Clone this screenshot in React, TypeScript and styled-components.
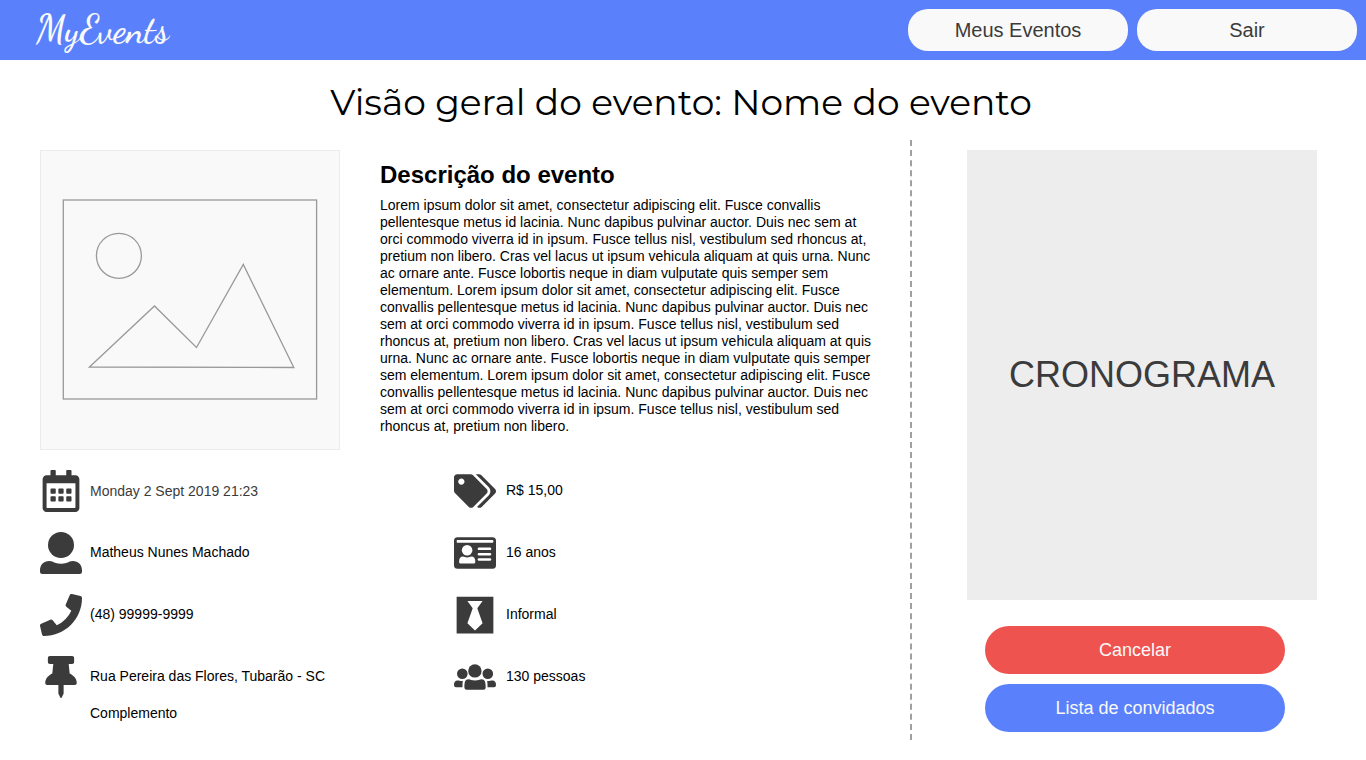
import React from 'react';
import styled, { createGlobalStyle } from 'styled-components';
import { FaRegCalendarAlt, FaPhone, FaThumbtack, FaTags, FaBlackTie } from 'react-icons/fa';

const GlobalStyle = createGlobalStyle`
  *, *::before, *::after { box-sizing: border-box; }
  body { margin: 0; background: #fff; color: #000; font: 14px/17px "Liberation Sans", Arial, sans-serif; }
  h1, h2, p { margin: 0; }
`;

const TopBar = styled.header`
  display: flex;
  align-items: center;
  justify-content: space-between;
  height: 60px;
  padding: 0 9px 0 36px;
  background: #5a81fb;
`;

const Logo = styled.a`
  color: #f9f9f9;
  font: 600 38px/44px "Satisfy", "Dancing Script", "Lato", cursive;
  text-decoration: none;
`;

const Nav = styled.nav`
  display: flex;
  gap: 9px;
`;

const NavButton = styled.button`
  width: 220px;
  height: 42px;
  padding: 0;
  border: 0;
  border-radius: 20px;
  background: #f9f9f9;
  color: #3b3b3b;
  font: 20px/24px "Liberation Sans", Arial, sans-serif;
  cursor: pointer;
`;

const Title = styled.h1`
  padding: 20px 4px 16px 0;
  font: 400 36px/44px "Montserrat", "Inter", sans-serif;
  text-align: center;
`;

const Page = styled.main`
  display: grid;
  grid-template-columns: minmax(0, 1fr) 456px;
  padding-bottom: 20px;
`;

const Overview = styled.section`
  min-height: 600px;
  padding: 10px 36px 0 40px;
`;

const Intro = styled.div`
  display: grid;
  grid-template-columns: 300px minmax(0, 1fr);
  gap: 40px;
`;

const Placeholder = styled.svg`
  display: block;
  width: 300px;
  height: 300px;
  border: 1px solid #ececec;
  background: #f9f9f9;
  fill: none;
  stroke: #999;
  stroke-width: 1.3;
`;

const Description = styled.div`
  padding-top: 10px;

  h2 {
    margin-bottom: 7px;
    font-size: 24px;
    line-height: 30px;
  }
`;

const Facts = styled.div`
  display: grid;
  grid-template-columns: 374px minmax(0, 1fr);
  gap: 40px;
  margin-top: 20px;
`;

const FactList = styled.ul<{ $gap: number }>`
  display: flex;
  flex-direction: column;
  gap: 20px;
  margin: 0;
  padding: 0;
  list-style: none;

  > li {
    column-gap: ${({ $gap }) => $gap}px;
  }
`;

const Fact = styled.li<{ $muted?: boolean }>`
  display: grid;
  grid-template-columns: 42px 1fr;
  align-items: center;
  color: ${({ $muted }) => ($muted ? '#3b3b3b' : '#000')};

  > svg {
    justify-self: center;
    color: #3b3b3b;
  }
`;

const Label = styled.span`
  padding-bottom: 2px;
`;

const Extra = styled.span`
  grid-column: 2;
  margin-top: 7px;
`;

const Side = styled.aside`
  display: flex;
  flex-direction: column;
  align-items: center;
  padding: 10px 8px 0 0;
  border-left: 2px dashed #a0a0a0;
`;

const Schedule = styled.div`
  display: flex;
  align-items: center;
  justify-content: center;
  width: 350px;
  height: 450px;
  margin-left: 14px;
  background: #ededed;
  color: #3b3b3b;
  font-size: 36px;
  line-height: 42px;
`;

const Actions = styled.div`
  display: flex;
  flex-direction: column;
  gap: 10px;
  width: 300px;
  margin-top: 26px;
`;

const ActionButton = styled.button<{ $danger?: boolean }>`
  height: 48px;
  border: 0;
  border-radius: 24px;
  background: ${({ $danger }) => ($danger ? '#ef5350' : '#5a81fb')};
  color: #f9f9f9;
  font: 18px/22px "Liberation Sans", Arial, sans-serif;
  cursor: pointer;
`;

const PersonIcon = () => (
  <svg width="42" height="42" viewBox="0 0 42 42" fill="currentColor" aria-hidden="true">
    <circle cx="21" cy="13" r="13" />
    <path d="M0 38.500C0 32.500 4 29 9 29C12 29 13 30 15 30.700Q21 32.700 27 30.700C29 30 30 29 33 29C38 29 42 32.500 42 38.500V39.500Q42 42 39.500 42H2.500Q0 42 0 39.500Z" />
  </svg>
);

const CardIcon = () => (
  <svg width="42" height="42" viewBox="0 0 42 42" fill="currentColor" aria-hidden="true">
    <rect y="5.300" width="42" height="31.400" rx="3.500" />
    <g fill="#fff">
      <rect x="2.700" y="7.900" width="36.600" height="2.800" rx="0.800" />
      <circle cx="13.100" cy="18.200" r="5.300" />
      <path d="M5.100 29.500C5.100 26.500 6.600 24.600 9 24.600C10.200 24.600 11 25.500 13.200 25.500C15.400 25.500 16.200 24.600 17.400 24.600C19.800 24.600 21.300 26.500 21.300 29.500V30Q21.300 31.500 19.800 31.500H6.600Q5.100 31.500 5.100 30Z" />
      <rect x="23.700" y="15.600" width="13.500" height="2.500" rx="1.200" />
      <rect x="23.700" y="20.900" width="13.500" height="2.500" rx="1.200" />
      <rect x="23.700" y="26.200" width="13.500" height="2.500" rx="1.200" />
    </g>
  </svg>
);

const GroupIcon = () => (
  <svg width="42" height="42" viewBox="0 0 42 42" fill="currentColor" aria-hidden="true">
    <circle cx="20.900" cy="14.900" r="6.700" />
    <circle cx="8.300" cy="17.800" r="5.300" />
    <circle cx="33.800" cy="17.800" r="5.300" />
    <path d="M10.400 31.500C10.400 26 11 23.200 14.500 23.200C16.500 23.200 17.500 24.500 21 24.500C24.500 24.500 25.500 23.200 27.500 23.200C31 23.200 31.700 26 31.700 31.500Q31.700 33.700 29.500 33.700H12.600Q10.400 33.700 10.400 31.500Z" />
    <path d="M0 29C0 26 1.200 24.400 3.500 24.400C5 24.400 6 25 8.800 25C8.400 27 8.500 29 8.500 31.200H2Q0 31.200 0 29Z" />
    <path d="M42 29C42 26 40.800 24.400 38.500 24.400C37 24.400 36 25 33.200 25C33.600 27 33.500 29 33.500 31.200H40Q42 31.200 42 29Z" />
  </svg>
);

export default function App() {
  return (
    <>
      <GlobalStyle />
      <TopBar>
        <Logo href="#">MyEvents</Logo>
        <Nav>
          <NavButton>Meus Eventos</NavButton>
          <NavButton>Sair</NavButton>
        </Nav>
      </TopBar>
      <Title>Visão geral do evento: Nome do evento</Title>
      <Page>
        <Overview>
          <Intro>
            <Placeholder viewBox="1 1 298 298" role="img" aria-label="Imagem do evento">
              <rect x="23.300" y="50" width="253.300" height="199" />
              <circle cx="78.900" cy="105.800" r="22.500" />
              <path d="M49.500 217L114.500 156L156.500 197.500L203.300 114.500L253.800 217.500Z" />
            </Placeholder>
            <Description>
              <h2>Descrição do evento</h2>
              <p>
                Lorem ipsum dolor sit amet, consectetur adipiscing elit. Fusce convallis pellentesque metus id lacinia. Nunc dapibus pulvinar auctor. Duis nec sem at orci commodo viverra id in ipsum. Fusce tellus nisl, vestibulum sed rhoncus at, pretium non libero. Cras vel lacus ut ipsum vehicula aliquam at quis urna. Nunc ac ornare ante. Fusce lobortis neque in diam vulputate quis semper sem elementum. Lorem ipsum dolor sit amet, consectetur adipiscing elit. Fusce convallis pellentesque metus id lacinia. Nunc dapibus pulvinar auctor. Duis nec sem at orci commodo viverra id in ipsum. Fusce tellus nisl, vestibulum sed rhoncus at, pretium non libero. Cras vel lacus ut ipsum vehicula aliquam at quis urna. Nunc ac ornare ante. Fusce lobortis neque in diam vulputate quis semper sem elementum. Lorem ipsum dolor sit amet, consectetur adipiscing elit. Fusce convallis pellentesque metus id lacinia. Nunc dapibus pulvinar auctor. Duis nec sem at orci commodo viverra id in ipsum. Fusce tellus nisl, vestibulum sed rhoncus at, pretium non libero.
              </p>
            </Description>
          </Intro>
          <Facts>
            <FactList $gap={8}>
              <Fact $muted><FaRegCalendarAlt size={42} />Monday 2 Sept 2019 21:23</Fact>
              <Fact><PersonIcon /><Label>Matheus Nunes Machado</Label></Fact>
              <Fact><FaPhone size={42} /><Label>(48) 99999-9999</Label></Fact>
              <Fact>
                <FaThumbtack size={42} />
                <Label>Rua Pereira das Flores, Tubarão - SC</Label>
                <Extra>Complemento</Extra>
              </Fact>
            </FactList>
            <FactList $gap={10}>
              <Fact><FaTags size={42} /><Label>R$ 15,00</Label></Fact>
              <Fact><CardIcon /><Label>16 anos</Label></Fact>
              <Fact><FaBlackTie size={42} /><Label>Informal</Label></Fact>
              <Fact><GroupIcon /><Label>130 pessoas</Label></Fact>
            </FactList>
          </Facts>
        </Overview>
        <Side>
          <Schedule>CRONOGRAMA</Schedule>
          <Actions>
            <ActionButton $danger>Cancelar</ActionButton>
            <ActionButton>Lista de convidados</ActionButton>
          </Actions>
        </Side>
      </Page>
    </>
  );
}
